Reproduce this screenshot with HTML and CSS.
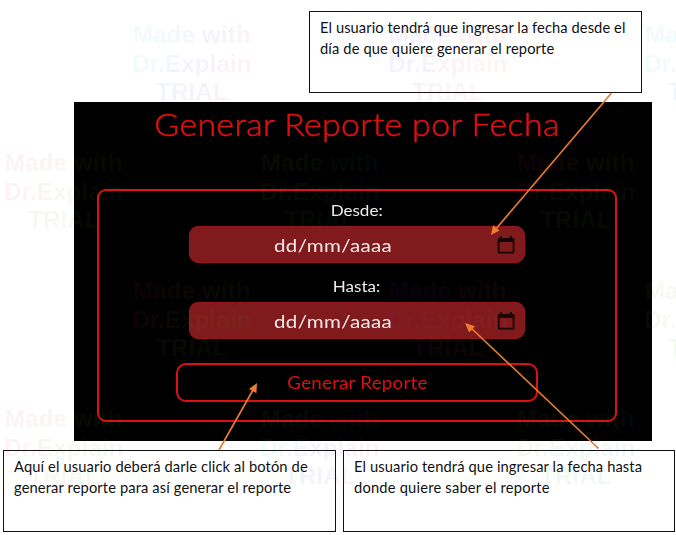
FILE: index.html
```html
<!DOCTYPE html>
<html lang="es">
<head>
<meta charset="utf-8">
<title>Generar Reporte por Fecha</title>
<link rel="stylesheet" href="styles.css">
</head>
<body>
<main class="page">
  <p class="note note-top"><span class="snug">El usuario tendrá que ingresar la fecha desde el</span><br>día de que quiere generar el reporte</p>

  <section class="panel">
    <h1 class="title">Generar Reporte por Fecha</h1>
    <form class="form">
      <div class="label">Desde:</div>
      <div class="field">
        <span class="value">dd/mm/aaaa</span>
        <svg class="icon" viewBox="0 0 18 20"><path fill-rule="evenodd" d="M3 1h2v2h8V1h2v2h1a1.5 1.5 0 0 1 1.5 1.5v12.5a1.5 1.5 0 0 1-1.5 1.5H2A1.5 1.5 0 0 1 .7 17V4.500A1.500 1.500 0 0 1 2 3h1zM2.500 7v9.700h13.200V7z"/></svg>
      </div>
      <div class="label label-second">Hasta:</div>
      <div class="field">
        <span class="value">dd/mm/aaaa</span>
        <svg class="icon" viewBox="0 0 18 20"><path fill-rule="evenodd" d="M3 1h2v2h8V1h2v2h1a1.5 1.5 0 0 1 1.5 1.5v12.5a1.5 1.5 0 0 1-1.5 1.5H2A1.5 1.5 0 0 1 .7 17V4.500A1.500 1.500 0 0 1 2 3h1zM2.500 7v9.700h13.200V7z"/></svg>
      </div>
      <button class="submit" type="button"><span class="submit-text">Generar Reporte</span></button>
    </form>
  </section>

  <div class="notes">
    <p class="note">Aquí el usuario deberá darle click al botón de<br>generar reporte para así generar el reporte</p>
    <p class="note note-right">El usuario tendrá que ingresar la fecha hasta<br><span class="loose">donde quiere saber el reporte</span></p>
  </div>

  <svg class="arrows" viewBox="0 0 676 535">
    <path class="line" d="M611.500 93L495 230M219 450l34-60M598.500 448.500L470 327"/>
    <path class="head" d="M491 235l2-10 6.500 5.600zM257 383l-.6 10.200-7.400-4.200zM465 323l10 3.200-5.900 6.300z"/>
  </svg>

  <div class="marks">
    <div class="mark-row shifted">
      <div class="mark green">Made with<br>Dr.Explain<br>TRIAL</div>
      <div class="mark violet">Made with<br>Dr.Explain<br>TRIAL</div>
      <div class="mark green">Made with<br>Dr.Explain<br>TRIAL</div>
    </div>
    <div class="mark-row">
      <div class="mark pink">Made with<br>Dr.Explain<br>TRIAL</div>
      <div class="mark amber">Made with<br>Dr.Explain<br>TRIAL</div>
      <div class="mark pink">Made with<br>Dr.Explain<br>TRIAL</div>
    </div>
    <div class="mark-row shifted">
      <div class="mark pink">Made with<br>Dr.Explain<br>TRIAL</div>
      <div class="mark violet">Made with<br>Dr.Explain<br>TRIAL</div>
      <div class="mark amber">Made with<br>Dr.Explain<br>TRIAL</div>
    </div>
    <div class="mark-row">
      <div class="mark pink">Made with<br>Dr.Explain<br>TRIAL</div>
      <div class="mark green">Made with<br>Dr.Explain<br>TRIAL</div>
      <div class="mark amber">Made with<br>Dr.Explain<br>TRIAL</div>
    </div>
  </div>
</main>
</body>
</html>
```
FILE: styles.css
```css
* { box-sizing: border-box; }
body { margin: 0; background: #fff; }
.page {
  position: relative;
  width: 676px;
  height: 535px;
  padding-top: 11px;
  overflow: hidden;
}
.note {
  width: 333px;
  height: 82px;
  margin: 0;
  padding: 5px 10px;
  border: 1px solid #111;
  background: #fff;
  color: #111;
  font: 14.7px/21px Lato, sans-serif;
  letter-spacing: 0.12px;
  white-space: nowrap;
}
.snug { letter-spacing: 0.08px; }
.loose { letter-spacing: 0.2px; }
.note-top { margin-left: 309px; }
.notes { display: flex; gap: 7px; margin: 9px 0 0 3px; }
.note-right { width: 332px; }

.panel {
  width: 578px;
  height: 339px;
  margin: 9px 0 0 74px;
  padding: 3px 35px 19px 23px;
  background: #000;
  font-family: Lato, sans-serif;
}
.title {
  height: 40px;
  margin: 0 0 44px;
  color: #e01010;
  font-size: 31.500px;
  font-weight: 300;
  line-height: 38px;
  text-align: center;
  letter-spacing: 0.3px;
  white-space: nowrap;
  transform: scaleX(1.077);
  -webkit-text-stroke: 0.5px #e01010;
}
.form {
  display: flex;
  flex-direction: column;
  align-items: center;
  height: 233px;
  padding-top: 9px;
  border: 2px solid #df1010;
  border-radius: 9px;
}
.label {
  height: 22px;
  margin-bottom: 4px;
  color: #eee;
  font-size: 15.500px;
  line-height: 20px;
  transform: scaleX(1.1);
}
.label-second { margin-top: 13px; }
.field {
  display: flex;
  align-items: center;
  justify-content: space-between;
  width: 336px;
  height: 37px;
  padding: 0 9px 0 84px;
  border: 1px solid #961719;
  border-radius: 9px;
  background: #801a1c;
}
.value {
  color: #f3e8e8;
  font-size: 18px;
  letter-spacing: 0.3px;
  transform: scaleX(1.14);
  transform-origin: left;
}
.icon { width: 18px; height: 20px; fill: #170405; }
.submit {
  width: 362px;
  height: 39px;
  margin-top: 24px;
  padding: 0;
  border: 2px solid #df1010;
  border-radius: 10px;
  background: #000;
  color: #df1010;
  font: 17px/35px Lato, sans-serif;
  letter-spacing: 0.2px;
}
.submit-text { display: inline-block; transform: scaleX(1.105); }

.arrows { position: absolute; inset: 0; width: 676px; height: 535px; }
.line { fill: none; stroke: #e77a30; stroke-width: 1.700; }
.head { fill: #ed7d31; }

.marks { position: absolute; inset: 7px 0 0; pointer-events: none; }
.mark-row { display: flex; gap: 128px; height: 128px; }
.shifted { margin-left: 128px; }
.mark {
  flex: none;
  width: 128px;
  height: 128px;
  padding-top: 14px;
  font: bold 24px/28.500px "Liberation Sans", sans-serif;
  letter-spacing: 0.2px;
  text-align: center;
  white-space: nowrap;
  color: transparent;
  background-clip: text;
  -webkit-background-clip: text;
  opacity: 0.06;
}
.green { background-image: linear-gradient(115deg, #20d040, #20c0d0, #5030d0, #e03070, #d04040); }
.violet { background-image: linear-gradient(115deg, #6030d0, #6040e0, #e03090, #e07030, #d04040); }
.pink { background-image: linear-gradient(115deg, #c020c0, #e04040, #90a020, #20a030, #20a050); }
.amber { background-image: linear-gradient(115deg, #d07030, #90a030, #20a040, #2080c0, #3040d0); }
```
